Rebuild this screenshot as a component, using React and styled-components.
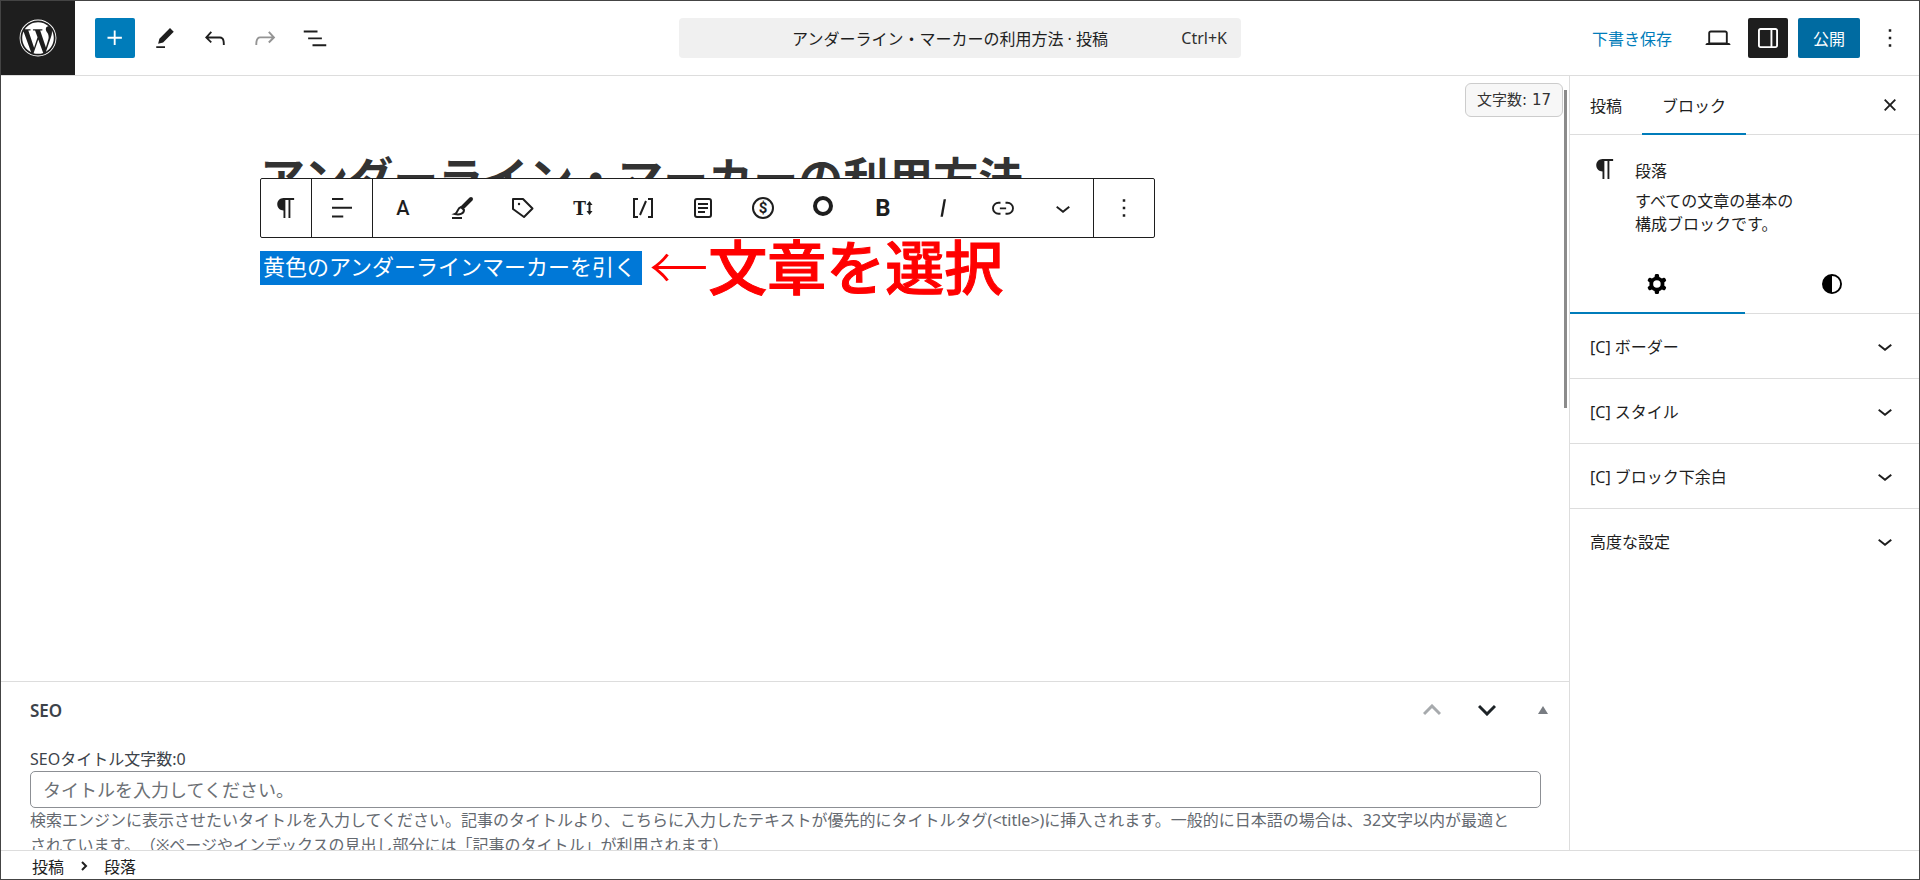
import React from 'react'

// styles
import styled, { createGlobalStyle } from 'styled-components'
import { FaWordpress } from 'react-icons/fa6'

const icons = {
  plus: 'M11 12.5V17.5H12.5V12.5H17.5V11H12.5V6H11V11H6V12.5H11Z',
  pencil: 'm19 7-3-3-8.5 8.5-1 4 4-1L19 7Zm-7 11.5H5V20h7v-1.5Z',
  undo: 'M18.3 11.7c-.6-.6-1.4-.9-2.3-.9H6.7l2.9-3.3-1.1-1-4.5 5L8.5 16l1-1-2.7-2.7H16c.5 0 .9.2 1.3.5 1 1 1 3.4 1 4.5v.3h1.5v-.2c0-1.5 0-4.3-1.5-5.7z',
  redo: 'M15.6 6.5l-1.1 1 2.9 3.3H8c-.9 0-1.7.3-2.3.9-1.4 1.5-1.4 4.2-1.4 5.6v.2h1.5v-.3c0-1.1 0-3.5 1-4.5.3-.3.7-.5 1.3-.5h9.2L14.5 15l1.1 1.1 4.6-4.6-4.6-5z',
  list: 'M3 6h11v1.5H3V6Zm3.5 5.5h11V13h-11v-1.5ZM21 17H10v1.5h11V17Z',
  desktop:
    'M20.5 16h-.7V8c0-1.1-.9-2-2-2H6.2c-1.1 0-2 .9-2 2v8h-.7c-.8 0-1.5.7-1.5 1.5h20c0-.8-.7-1.5-1.5-1.5zM5.7 8c0-.3.2-.5.5-.5h11.6c.3 0 .5.2.5.5v7.6H5.7V8z',
  drawer:
    'M18 4H6c-1.1 0-2 .9-2 2v12c0 1.1.9 2 2 2h12c1.1 0 2-.9 2-2V6c0-1.1-.9-2-2-2zm-4 14.5H6c-.3 0-.5-.2-.5-.5V6c0-.3.2-.5.5-.5h8v13zm4.5-.5c0 .3-.2.5-.5.5h-2.5v-13H18c.3 0 .5.2.5.5v12z',
  more: 'M13 19h-2v-2h2v2zm0-6h-2v-2h2v2zm0-6h-2V5h2v2z',
  close:
    'M12 13.06l3.712 3.713 1.061-1.06L13.061 12l3.712-3.712-1.06-1.06L12 10.938 8.288 7.227l-1.061 1.06L10.939 12l-3.712 3.712 1.06 1.061L12 13.061z',
  chevron: 'M17.5 11.6L12 16l-5.5-4.4.9-1.2L12 14l4.5-3.6 1 1.2z',
  paragraph:
    'm9.99609 14v-.2251l.00391.0001v6.225h1.5v-14.5h2.5v14.5h1.5v-14.5h3v-1.5h-8.50391c-2.76142 0-5 2.23858-5 5 0 2.7614 2.23858 5 5 5z',
  align: 'M13 5.5H4V4h9v1.5Zm7 7H4V11h16v1.5Zm-7 7H4V18h9v1.5Z',
  italic: 'M12.5 5L10 19h1.9l2.5-14z',
  link: 'M10 17.389H8.444A5.194 5.194 0 1 1 8.444 7H10v1.5H8.444a3.694 3.694 0 0 0 0 7.389H10v1.5ZM14 7h1.556a5.194 5.194 0 0 1 0 10.39H14v-1.5h1.556a3.694 3.694 0 0 0 0-7.39H14V7Zm-4.5 6h5v-1.5h-5V13Z',
  cog: 'M10.289 4.836A1 1 0 0111.275 4h1.306a1 1 0 01.987.836l.244 1.466c.787.26 1.503.679 2.108 1.218l1.393-.522a1 1 0 011.216.437l.653 1.13a1 1 0 01-.23 1.273l-1.148.944a6.025 6.025 0 010 2.435l1.149.946a1 1 0 01.23 1.272l-.653 1.13a1 1 0 01-1.216.437l-1.394-.522c-.605.54-1.32.958-2.108 1.218l-.244 1.466a1 1 0 01-.987.836h-1.306a1 1 0 01-.986-.836l-.244-1.466a5.995 5.995 0 01-2.108-1.218l-1.394.522a1 1 0 01-1.217-.436l-.653-1.131a1 1 0 01.23-1.272l1.149-.946a6.026 6.026 0 010-2.435l-1.148-.944a1 1 0 01-.23-1.272l.653-1.131a1 1 0 011.217-.437l1.393.522a5.994 5.994 0 012.108-1.218l.244-1.466zM14.929 12a3 3 0 11-6 0 3 3 0 016 0z',
  contrast:
    'M20 12a8 8 0 1 1-16 0 8 8 0 0 1 16 0Zm-1.5 0a6.5 6.5 0 0 1-6.5 6.5v-13a6.5 6.5 0 0 1 6.5 6.5Z',
}

const Icon = ({ name, size = 30 }) => (
  <svg width={size} height={size} viewBox='0 0 24 24' aria-hidden='true'>
    <path d={icons[name]} fill='currentColor' fillRule='evenodd' />
  </svg>
)

const LineIcon = ({ children, width = 2 }) => (
  <svg
    width='30'
    height='30'
    viewBox='0 0 30 30'
    fill='none'
    stroke='currentColor'
    strokeWidth={width}
    aria-hidden='true'
  >
    {children}
  </svg>
)

const tools = [
  {
    label: '文字色',
    icon: (
      <Glyph $size={20} $weight={500}>
        A
      </Glyph>
    ),
  },
  {
    label: 'マーカー',
    icon: (
      <LineIcon>
        <path d='M23 6 15 14' strokeWidth='4' strokeLinecap='round' />
        <path d='M7 21c3-1 2-6 6-7l3 3c0 4-5 5-9 4z' />
        <path d='M4 25h10' />
      </LineIcon>
    ),
  },
  {
    label: 'バッジ',
    icon: (
      <LineIcon>
        <path d='M5 6h10l9.500 9.500-8.500 8.500L5 16z' strokeLinejoin='round' />
        <circle cx='11' cy='11' r='1.2' fill='currentColor' stroke='none' />
      </LineIcon>
    ),
  },
  {
    label: '文字サイズ',
    icon: (
      <>
        <Glyph $size={19} $slab>
          T
        </Glyph>
        <svg width='7' height='16' viewBox='0 0 7 16' aria-hidden='true'>
          <path d='M3.500 3v10' stroke='currentColor' strokeWidth='2' />
          <path d='M3.500 1 6.500 5h-6zM3.500 15l3-4h-6z' fill='currentColor' />
        </svg>
      </>
    ),
  },
  {
    label: 'ショートコード',
    icon: (
      <LineIcon>
        <path d='M10 6H6v18h4M20 6h4v18h-4M18 8l-6 14' />
      </LineIcon>
    ),
  },
  {
    label: 'テンプレート',
    icon: (
      <LineIcon>
        <rect x='7' y='6' width='16' height='18' rx='2' />
        <path d='M10 11h10M10 15h10M10 19h7' />
      </LineIcon>
    ),
  },
  {
    label: 'アフィリエイト',
    icon: (
      <LineIcon>
        <circle cx='15' cy='15' r='10' />
        <text
          x='15'
          y='20'
          fontSize='15'
          fontWeight='700'
          fontFamily='Roboto, sans-serif'
          textAnchor='middle'
          fill='currentColor'
          stroke='none'
        >
          $
        </text>
      </LineIcon>
    ),
  },
  {
    label: 'ランキング',
    icon: (
      <LineIcon width={4}>
        <circle cx='15' cy='13' r='8' />
      </LineIcon>
    ),
  },
  { label: '太字', icon: <Glyph $size={24}>B</Glyph> },
  { label: 'イタリック', icon: <Icon name='italic' /> },
  { label: 'リンク', icon: <Icon name='link' /> },
  { label: 'さらに表示', icon: <Icon name='chevron' /> },
]

const panels = [
  '[C] ボーダー',
  '[C] スタイル',
  '[C] ブロック下余白',
  '高度な設定',
]

const App = () => {
  return (
    <>
      <GlobalStyle />
      <Editor>
        <Header>
          <Logo href='#' aria-label='投稿を表示'>
            <FaWordpress size={38} />
          </Logo>
          <Tools>
            <IconButton aria-label='ブロック挿入' $primary>
              <Icon name='plus' />
            </IconButton>
            <IconButton aria-label='ツール'>
              <Icon name='pencil' />
            </IconButton>
            <IconButton aria-label='元に戻す'>
              <Icon name='undo' />
            </IconButton>
            <IconButton aria-label='やり直す' disabled>
              <Icon name='redo' />
            </IconButton>
            <IconButton aria-label='リスト表示'>
              <Icon name='list' />
            </IconButton>
          </Tools>
          <CommandBar>
            <span>アンダーライン・マーカーの利用方法 · 投稿</span>
            <kbd>Ctrl+K</kbd>
          </CommandBar>
          <Actions>
            <SaveDraft>下書き保存</SaveDraft>
            <IconButton aria-label='表示'>
              <Icon name='desktop' />
            </IconButton>
            <IconButton aria-label='設定' $dark>
              <Icon name='drawer' />
            </IconButton>
            <Publish>公開</Publish>
            <IconButton aria-label='オプション'>
              <Icon name='more' />
            </IconButton>
          </Actions>
        </Header>

        <Body>
          <Main>
            <Canvas>
              <Counter>文字数: 17</Counter>
              <Scrollbar />
              <Post>
                <h1>アンダーライン・マーカーの利用方法</h1>
                <BlockToolbar role='toolbar' aria-label='ブロックツール'>
                  <ToolGroup $width={50}>
                    <Tool aria-label='段落'>
                      <Icon name='paragraph' />
                    </Tool>
                  </ToolGroup>
                  <ToolGroup $width={60}>
                    <Tool aria-label='配置'>
                      <Icon name='align' />
                    </Tool>
                  </ToolGroup>
                  <ToolGroup>
                    {tools.map(({ label, icon }) => (
                      <Tool key={label} aria-label={label}>
                        {icon}
                      </Tool>
                    ))}
                  </ToolGroup>
                  <ToolGroup $width={60}>
                    <Tool aria-label='オプション'>
                      <Icon name='more' />
                    </Tool>
                  </ToolGroup>
                </BlockToolbar>
                <BlockRow>
                  <Selected>黄色のアンダーラインマーカーを引く</Selected>
                  <Note>
                    <span>←</span>文章を選択
                  </Note>
                </BlockRow>
              </Post>
            </Canvas>

            <MetaBox>
              <MetaHead>
                <h2>SEO</h2>
                <MetaButton aria-label='上に移動' disabled>
                  <svg width='18' height='12' viewBox='0 0 18 12'>
                    <path d='M1 10l8-8 8 8' />
                  </svg>
                </MetaButton>
                <MetaButton aria-label='下に移動'>
                  <svg width='18' height='12' viewBox='0 0 18 12'>
                    <path d='M1 2l8 8 8-8' />
                  </svg>
                </MetaButton>
                <MetaButton aria-label='パネルを閉じる' $small>
                  <svg width='10' height='12' viewBox='0 0 10 12'>
                    <path d='M5 2l5 8H0z' />
                  </svg>
                </MetaButton>
              </MetaHead>
              <Field>
                <label htmlFor='seo-title'>SEOタイトル文字数:0</label>
                <input
                  id='seo-title'
                  type='text'
                  placeholder='タイトルを入力してください。'
                />
                <p>
                  検索エンジンに表示させたいタイトルを入力してください。記事のタイトルより、こちらに入力したテキストが優先的にタイトルタグ(&lt;title&gt;)に挿入されます。一般的に日本語の場合は、32文字以内が最適とされています。（※ページやインデックスの見出し部分には「記事のタイトル」が利用されます）
                </p>
              </Field>
            </MetaBox>
          </Main>

          <Sidebar>
            <Tabs>
              <Tab>投稿</Tab>
              <Tab $active>ブロック</Tab>
              <IconButton aria-label='設定を閉じる'>
                <Icon name='close' />
              </IconButton>
            </Tabs>
            <BlockCard>
              <Icon name='paragraph' />
              <div>
                <h2>段落</h2>
                <p>すべての文章の基本の構成ブロックです。</p>
              </div>
            </BlockCard>
            <IconTabs>
              <IconTab aria-label='設定' $active>
                <Icon name='cog' />
              </IconTab>
              <IconTab aria-label='スタイル'>
                <Icon name='contrast' />
              </IconTab>
            </IconTabs>
            {panels.map((title) => (
              <Panel key={title}>
                {title}
                <Icon name='chevron' />
              </Panel>
            ))}
          </Sidebar>
        </Body>

        <Footer>
          <a href='#post'>投稿</a>
          <svg width='8' height='12' viewBox='0 0 8 12' aria-hidden='true'>
            <path
              d='M2 2l4 4-4 4'
              fill='none'
              stroke='#1e1e1e'
              strokeWidth='2'
            />
          </svg>
          <span>段落</span>
        </Footer>
      </Editor>
    </>
  )
}

const GlobalStyle = createGlobalStyle`
  * {
    margin: 0;
    padding: 0;
    box-sizing: border-box;
  }
  body {
    color: #1e1e1e;
    background: #ffffff;
    font-family: 'Noto Sans', 'Noto Sans CJK JP', sans-serif;
    font-size: 16px;
    text-spacing-trim: space-all;
  }
  button, input, kbd {
    font: inherit;
    color: inherit;
  }
  button {
    background: none;
    border: none;
    cursor: pointer;
  }
  a {
    color: inherit;
    text-decoration: none;
  }
  svg {
    display: block;
    flex: none;
  }
`

const Editor = styled.div`
  display: flex;
  flex-direction: column;
  height: 100vh;
  border: 1px solid #444444;
`

const Header = styled.header`
  display: grid;
  grid-template-columns: 1fr 562px 1fr;
  align-items: center;
  flex: none;
  height: 75px;
  border-bottom: 1px solid #dddddd;
`

const Logo = styled.a`
  display: flex;
  align-items: center;
  justify-content: center;
  grid-area: 1 / 1;
  width: 74px;
  height: 74px;
  color: #ffffff;
  background: #1e1e1e;
`

const Tools = styled.div`
  display: flex;
  gap: 10px;
  grid-area: 1 / 1;
  padding-left: 94px;
`

const IconButton = styled.button`
  display: flex;
  align-items: center;
  justify-content: center;
  width: 40px;
  height: 40px;
  border-radius: 2px;
  color: ${({ $primary, $dark }) => ($primary || $dark ? '#fff' : '#1e1e1e')};
  background: ${({ $primary, $dark }) =>
    $primary ? '#007cba' : $dark ? '#1e1e1e' : 'none'};
  &:disabled {
    color: #949494;
  }
`

const CommandBar = styled.button`
  display: grid;
  grid-template-columns: 40px 1fr 60px;
  align-items: center;
  height: 40px;
  padding: 0 14px;
  border-radius: 4px;
  background: #f0f0f0;
  span {
    grid-column: 2;
    white-space: nowrap;
  }
  kbd {
    text-align: right;
    color: #2f2f2f;
  }
`

const Actions = styled.div`
  display: flex;
  align-items: center;
  justify-content: flex-end;
  gap: 10px;
  padding-right: 9px;
`

const SaveDraft = styled.button`
  height: 40px;
  padding: 0 16px;
  color: #007cba;
`

const Publish = styled.button`
  height: 40px;
  padding: 0 15px;
  border-radius: 2px;
  color: #ffffff;
  background: #006ba1;
`

const Body = styled.div`
  display: flex;
  flex: 1;
  min-height: 0;
`

const Main = styled.main`
  display: flex;
  flex-direction: column;
  flex: 1;
  min-width: 0;
`

const Canvas = styled.section`
  flex: 1;
  min-height: 0;
  overflow: hidden;
  position: relative;
`

const Counter = styled.div`
  position: absolute;
  top: 7px;
  right: 6px;
  padding: 0 11px;
  border: 1px solid #cccccc;
  border-radius: 6px;
  background: #f7f7f7;
  color: #333333;
  font-family: 'DejaVu Sans', 'Noto Sans CJK JP', sans-serif;
  font-size: 15px;
  line-height: 32px;
`

const Scrollbar = styled.div`
  position: absolute;
  top: 14px;
  right: 2px;
  width: 3px;
  height: 318px;
  background: #8b8b8b;
`

const Post = styled.article`
  max-width: 1050px;
  margin: 0 auto;
  padding-top: 75px;
  position: relative;
  h1 {
    color: #333333;
    font-size: 45px;
    font-weight: 700;
    line-height: 56px;
  }
`

const BlockToolbar = styled.div`
  display: flex;
  position: absolute;
  top: 102px;
  left: 0;
  height: 60px;
  border: 1px solid #1e1e1e;
  border-radius: 2px;
  background: #ffffff;
`

const ToolGroup = styled.div`
  display: flex;
  button {
    width: ${({ $width }) => $width || 60}px;
  }
  & + & {
    border-left: 1px solid #1e1e1e;
  }
`

const Tool = styled.button`
  display: flex;
  align-items: center;
  justify-content: center;
`

function Glyph({ children, ...props }) {
  return (
    <GlyphText {...props} aria-hidden='true'>
      {children}
    </GlyphText>
  )
}

const GlyphText = styled.span`
  font-family: ${({ $slab }) =>
    $slab ? "'DejaVu Serif Condensed', 'DejaVu Serif', serif" : 'Roboto, sans-serif'};
  font-size: ${({ $size }) => $size}px;
  font-weight: ${({ $weight }) => $weight || 700};
  line-height: 30px;
`

const BlockRow = styled.div`
  display: flex;
  align-items: center;
  gap: 7px;
  height: 80px;
  margin-top: 21px;
`

const Selected = styled.p`
  padding: 0 6px 4px 3px;
  color: #ffffff;
  background: #0078d7;
  font-size: 22px;
  line-height: 30px;
  white-space: nowrap;
`

const Note = styled.strong`
  display: flex;
  align-self: flex-start;
  color: #ff0000;
  font-family: 'Noto Sans CJK JP', sans-serif;
  font-size: 59px;
  font-weight: 500;
  line-height: 74px;
  white-space: nowrap;
  -webkit-text-stroke: 1px #ff0000;
  span {
    font-weight: 300;
    -webkit-text-stroke: 0;
  }
`

const MetaBox = styled.section`
  flex: none;
  height: 169px;
  overflow: hidden;
  border-top: 1px solid #dddddd;
`

const MetaHead = styled.div`
  display: flex;
  align-items: center;
  height: 56px;
  padding: 0 16px 0 29px;
  h2 {
    flex: 1;
    color: #3c434a;
    font-size: 17px;
    font-weight: 600;
  }
`

const MetaButton = styled.button`
  display: flex;
  align-items: center;
  justify-content: center;
  width: ${({ $small }) => ($small ? 20 : 55)}px;
  height: 40px;
  margin-left: ${({ $small }) => ($small ? 19 : 0)}px;
  svg {
    fill: ${({ $small }) => ($small ? '#787c82' : 'none')};
    stroke: ${({ $small }) => ($small ? 'none' : '#1d2327')};
    stroke-width: 3;
  }
  &:disabled svg {
    stroke: #a7aaad;
  }
`

const Field = styled.div`
  padding: 9px 28px 0 29px;
  color: #3c434a;
  label {
    display: block;
    line-height: 24px;
  }
  input {
    display: block;
    width: 100%;
    height: 37px;
    padding: 0 12px;
    border: 1px solid #8c8f94;
    border-radius: 5px;
    font-size: 18px;
  }
  input::placeholder {
    color: #6c7075;
    opacity: 1;
  }
  p {
    padding-right: 16px;
    color: #646970;
    line-height: 25px;
  }
`

const Sidebar = styled.aside`
  flex: none;
  width: 350px;
  border-left: 1px solid #dddddd;
`

const Tabs = styled.div`
  display: flex;
  align-items: center;
  height: 59px;
  padding-right: 9px;
  border-bottom: 1px solid #dddddd;
  ${IconButton} {
    margin-left: auto;
  }
`

const Tab = styled.button`
  height: 59px;
  padding: 0 20px;
  box-shadow: ${({ $active }) =>
    $active ? 'inset 0 -2px 0 #007cba' : 'none'};
`

const BlockCard = styled.div`
  display: flex;
  gap: 15px;
  padding: 19px 20px 0;
  h2 {
    font-size: 16px;
    font-weight: 400;
    line-height: 34px;
  }
  p {
    max-width: 168px;
    padding-top: 2px;
    line-height: 23px;
  }
`

const IconTabs = styled.div`
  display: flex;
  height: 60px;
  margin-top: 18px;
  border-bottom: 1px solid #dddddd;
`

const IconTab = styled.button`
  display: flex;
  align-items: center;
  justify-content: center;
  flex: 1;
  height: 60px;
  color: #000000;
  box-shadow: ${({ $active }) =>
    $active ? 'inset 0 -2px 0 #007cba' : 'none'};
`

const Panel = styled.button`
  display: flex;
  align-items: center;
  justify-content: space-between;
  width: 100%;
  height: 65px;
  padding: 0 19px 0 20px;
  border-bottom: 1px solid #dddddd;
  &:last-child {
    height: 63px;
    border-bottom: none;
  }
`

const Footer = styled.footer`
  display: flex;
  align-items: center;
  gap: 16px;
  flex: none;
  height: 29px;
  padding: 2px 31px 0;
  border-top: 1px solid #dddddd;
`

export default App
